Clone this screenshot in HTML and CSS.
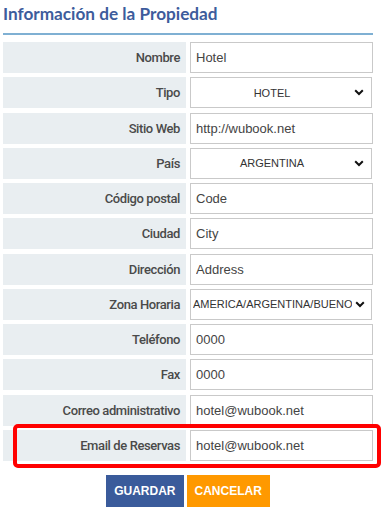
FILE: index.html
```html
<!DOCTYPE html>
<html lang="es">
<head>
<meta charset="utf-8">
<title>Información de la Propiedad</title>
<link rel="stylesheet" href="styles.css">
</head>
<body>
<div class="page">
  <h2 class="title">Información de la Propiedad</h2>
  <div class="form">
    <div class="row"><label class="lbl">Nombre</label><div class="fld"><input class="inp" value="Hotel"></div></div>
    <div class="row"><label class="lbl">Tipo</label><div class="fld"><select class="sel center"><option>HOTEL</option></select></div></div>
    <div class="row"><label class="lbl">Sitio Web</label><div class="fld"><input class="inp" value="http://wubook.net"></div></div>
    <div class="row"><label class="lbl">País</label><div class="fld"><select class="sel center"><option>ARGENTINA</option></select></div></div>
    <div class="row"><label class="lbl">Código postal</label><div class="fld"><input class="inp" value="Code"></div></div>
    <div class="row"><label class="lbl">Ciudad</label><div class="fld"><input class="inp" value="City"></div></div>
    <div class="row"><label class="lbl">Dirección</label><div class="fld"><input class="inp" value="Address"></div></div>
    <div class="row"><label class="lbl">Zona Horaria</label><div class="fld"><select class="sel tz"><option>AMERICA/ARGENTINA/BUENOS_AIRES</option></select></div></div>
    <div class="row"><label class="lbl">Teléfono</label><div class="fld"><input class="inp" value="0000"></div></div>
    <div class="row"><label class="lbl">Fax</label><div class="fld"><input class="inp" value="0000"></div></div>
    <div class="row"><label class="lbl">Correo administrativo</label><div class="fld"><input class="inp" value="hotel@wubook.net"></div></div>
    <div class="row hl-row"><label class="lbl">Email de Reservas</label><div class="fld"><input class="inp" value="hotel@wubook.net"></div><span class="highlight"></span></div>
  </div>
  <div class="actions">
    <button class="btn save">GUARDAR</button>
    <button class="btn cancel">CANCELAR</button>
  </div>
</div>
</body>
</html>
```
FILE: styles.css
```css
html, body {
  margin: 0;
  padding: 0;
  background: #ffffff;
}
.page {
  width: 370px;
  padding: 0 0 0 3px;
  font-family: Roboto, "Liberation Sans", sans-serif;
}
.title {
  margin: 0;
  padding: 3px 0 0 0;
  height: 30px;
  box-sizing: content-box;
  font-family: Lato, "Liberation Sans", sans-serif;
  font-weight: 700;
  font-size: 17.2px;
  line-height: 22px;
  color: #3d5c9c;
  border-bottom: 2px solid #7fb0d3;
}
.form {
  display: flex;
  flex-direction: column;
  gap: 4.27px;
  margin-top: 7px;
}
.row {
  display: grid;
  grid-template-columns: 183px 183px;
  column-gap: 4px;
  height: 31px;
  position: relative;
}
.lbl {
  background: #e9eef1;
  display: flex;
  align-items: center;
  justify-content: flex-end;
  padding-right: 6px;
  font-size: 13px;
  font-weight: 500;
  color: #4a4a4a;
  letter-spacing: -0.4px;
}
.fld {
  display: flex;
}
.inp {
  width: 100%;
  height: 31px;
  box-sizing: border-box;
  border: 1px solid #c9c9c9;
  border-radius: 0;
  padding: 0 5px;
  font-family: "Liberation Sans", Arial, sans-serif;
  font-size: 13px;
  color: #444;
  background: #fff;
  outline: none;
}
.sel {
  -webkit-appearance: none;
  appearance: none;
  width: 182px;
  height: 31px;
  box-sizing: border-box;
  border: 1px solid #c9c9c9;
  border-radius: 0;
  font-family: "Liberation Sans", Arial, sans-serif;
  font-size: 11px;
  color: #333;
  background: #fff url("data:image/svg+xml,%3Csvg xmlns='http://www.w3.org/2000/svg' width='10' height='7' viewBox='0 0 10 7'%3E%3Cpath d='M1.2 1.3 L5 5 L8.8 1.3' fill='none' stroke='%23111' stroke-width='2'/%3E%3C/svg%3E") no-repeat right 7px center;
  outline: none;
}
.sel.center {
  text-align: center;
  text-align-last: center;
  padding: 0 22px 0 4px;
}
.sel.tz {
  padding: 0 19px 0 2px;
  background-position: right 6px center;
}
.hl-row {
  z-index: 1;
}
.highlight {
  position: absolute;
  left: 10px;
  top: -6px;
  width: 368px;
  height: 44px;
  box-sizing: border-box;
  border: 4px solid #ff0000;
  border-radius: 5px;
  pointer-events: none;
}
.actions {
  display: flex;
  justify-content: center;
  gap: 3px;
  margin-top: 14px;
  width: 370px;
}
.btn {
  height: 32px;
  border: none;
  border-radius: 0;
  font-family: "Liberation Sans", Arial, sans-serif;
  font-weight: 700;
  font-size: 12px;
  color: #fff;
  padding: 0 8px;
  cursor: pointer;
}
.save {
  background: #3a5b9b;
}
.cancel {
  background: #ff9900;
}
```
